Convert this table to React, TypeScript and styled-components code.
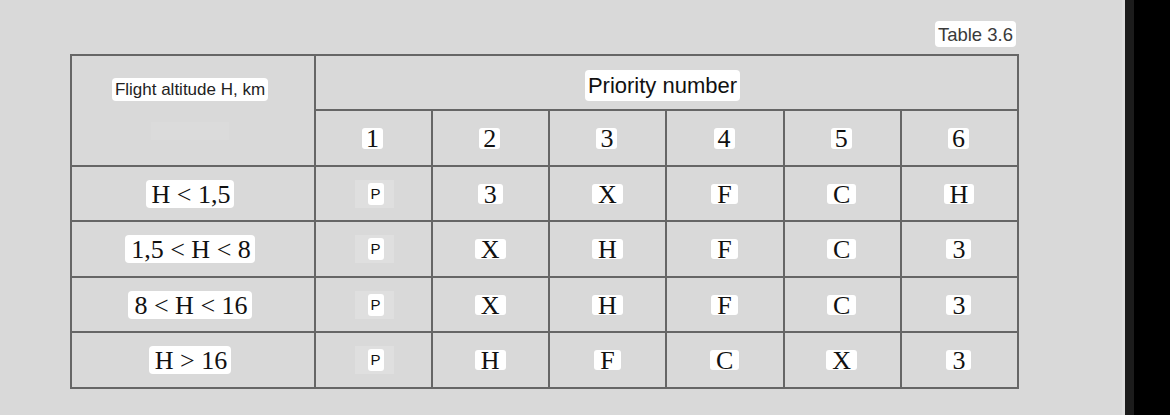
import React from "react";
import styled, { createGlobalStyle, css } from "styled-components";

const GlobalStyle = createGlobalStyle`
  html, body { margin: 0; padding: 0; background: #d9d9d9; }
  body { font-family: "Liberation Sans", Arial, sans-serif; }
`;

const Page = styled.div`
  display: flex;
  width: 1170px;
  height: 415px;
  overflow: hidden;
`;

const Sheet = styled.div`
  width: 1122px;
  box-sizing: border-box;
  padding: 21px 0 0 70px;
  background: #d9d9d9;
`;

const LightEdge = styled.div`
  width: 3px;
  background: #dedede;
`;

const DarkEdge = styled.div`
  width: 9px;
  background: #1c1c1c;
`;

const Black = styled.div`
  flex: 1;
  background: #000;
`;

const CaptionRow = styled.div`
  width: 949px;
  display: flex;
  justify-content: flex-end;
  box-sizing: border-box;
  padding-right: 3px;
  margin-bottom: 7px;
`;

const Caption = styled.span`
  font-family: "Liberation Sans", Arial, sans-serif;
  font-size: 18.5px;
  height: 26px;
  line-height: 27px;
  color: #3a3a3a;
  background: #fff;
  border-radius: 4px;
  padding: 0 3px;
`;

const Grid = styled.div`
  display: grid;
  width: 949px;
  box-sizing: border-box;
  grid-template-columns: 242px repeat(6, 1fr);
  grid-template-rows: 53px 54px 53px 54px 53px 54px;
  gap: 2px;
  padding: 2px;
  background: #666;
`;

const Cell = styled.div<{ $shift?: number }>`
  background: #d9d9d9;
  display: flex;
  align-items: center;
  justify-content: center;
  padding-right: ${(p) => p.$shift ?? 0}px;
`;

const CornerCell = styled(Cell)`
  grid-row: span 2;
  flex-direction: column;
  justify-content: flex-start;
  padding-top: 22px;
  gap: 21px;
`;

const PriorityCell = styled(Cell)`
  grid-column: span 6;
  padding-top: 6px;
`;

const SansLabel = styled.span`
  font-family: "Liberation Sans", Arial, sans-serif;
  font-size: 17px;
  height: 23px;
  line-height: 24px;
  color: #222;
  background: #fff;
  border-radius: 4px;
  padding: 0 3px;
  white-space: nowrap;
`;

const Ghost = styled.span<{ $w: number; $h: number }>`
  display: block;
  width: ${(p) => p.$w}px;
  height: ${(p) => p.$h}px;
  background: #dbdbdb;
`;

const Heading = styled.span`
  font-family: "Liberation Sans", Arial, sans-serif;
  font-size: 22px;
  height: 31px;
  line-height: 31px;
  color: #111;
  background: #fff;
  border-radius: 4px;
  padding: 0 3px;
  white-space: nowrap;
`;

type Kind = "row" | "letter" | "num";

const Chip = styled.span<{ $kind: Kind }>`
  font-family: "Liberation Serif", "Times New Roman", serif;
  font-size: 26px;
  color: #111;
  background: #fff;
  border-radius: 3px;
  white-space: pre;
  display: inline-block;
  ${(p) =>
    p.$kind === "row" &&
    css`
      height: 28px;
      line-height: 29px;
      padding: 0 4px 0 6px;
      border-radius: 4px;
    `}
  ${(p) =>
    p.$kind === "letter" &&
    css`
      height: 20px;
      line-height: 22px;
      padding: 0 6px;
    `}
  ${(p) =>
    p.$kind === "num" &&
    css`
      height: 21px;
      line-height: 22px;
      padding: 0 4px;
    `}
`;

const PBack = styled.span`
  display: flex;
  align-items: center;
  height: 28px;
  padding: 0 10px 0 13px;
  background: #dfdfdf;
  margin-left: 1px;
`;

const PChip = styled.span`
  font-family: "Liberation Sans", Arial, sans-serif;
  font-size: 15px;
  color: #111;
  background: #fff;
  border-radius: 3px;
  height: 22px;
  line-height: 22px;
  padding: 0 3px;
`;

const rows: { label: string; cells: string[] }[] = [
  { label: "H < 1,5", cells: ["3", "X", "F", "C", "H"] },
  { label: "1,5 < H < 8", cells: ["X", "H", "F", "C", "3"] },
  { label: "8 < H < 16", cells: ["X", "H", "F", "C", "3"] },
  { label: "H > 16", cells: ["H", "F", "C", "X", "3"] },
];

export default function App() {
  return (
    <>
      <GlobalStyle />
      <Page>
        <Sheet>
          <CaptionRow>
            <Caption>Table 3.6</Caption>
          </CaptionRow>
          <Grid>
            <CornerCell $shift={6}>
              <SansLabel>Flight altitude H, km</SansLabel>
              <Ghost $w={78} $h={18} />
            </CornerCell>
            <PriorityCell $shift={8}>
              <Heading>Priority number</Heading>
            </PriorityCell>
            {[1, 2, 3, 4, 5, 6].map((n) => (
              <Cell key={n} $shift={2}>
                <Chip $kind="num">{n}</Chip>
              </Cell>
            ))}
            {rows.map((r) => (
              <React.Fragment key={r.label}>
                <Cell $shift={6}>
                  <Chip $kind="row">{r.label}</Chip>
                </Cell>
                <Cell>
                  <PBack>
                    <PChip>P</PChip>
                  </PBack>
                </Cell>
                {r.cells.map((c, i) => (
                  <Cell key={i} $shift={1}>
                    <Chip $kind="letter">{c}</Chip>
                  </Cell>
                ))}
              </React.Fragment>
            ))}
          </Grid>
        </Sheet>
        <LightEdge />
        <DarkEdge />
        <Black />
      </Page>
    </>
  );
}
